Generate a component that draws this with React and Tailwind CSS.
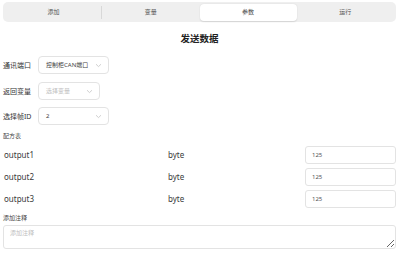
import React from "react";

const font = { fontFamily: '"Noto Sans", "Noto Sans CJK SC", sans-serif' };

function Chevron() {
  return (
    <svg width="7" height="5" viewBox="0 0 7 5" className="shrink-0">
      <path d="M1 1.2 L3.5 3.6 L6 1.2" fill="none" stroke="#c4c4c4" strokeWidth="0.8" />
    </svg>
  );
}

function Select({ width, value, placeholder }) {
  return (
    <div
      className={`flex h-[18px] items-center justify-between rounded-[4px] border border-[#e3e3e3] bg-white pl-[7px] pr-[6px] ${width}`}
    >
      <span className={`text-[6px] leading-none ${placeholder ? "text-[#c0c0c0]" : "text-[#444]"}`}>
        {value}
      </span>
      <Chevron />
    </div>
  );
}

function FormRow({ label, children, className }) {
  return (
    <div className={`flex h-[18px] items-center ${className}`}>
      <span className="w-[35px] text-[7px] leading-none text-[#333]">{label}</span>
      {children}
    </div>
  );
}

function TableRow({ name, className }) {
  return (
    <div className={`flex h-[18px] items-center ${className}`}>
      <span className="w-[165px] pl-[1px] text-[8px] leading-none text-[#3a3a3a]">{name}</span>
      <span className="flex-1 text-[8px] leading-none text-[#3a3a3a]">byte</span>
      <div className="flex h-[18px] w-[91px] items-center rounded-[3px] border border-[#e3e3e3] bg-white pl-[6px]">
        <span className="text-[6px] leading-none text-[#555]">125</span>
      </div>
    </div>
  );
}

export default function App() {
  const tabs = ["添加", "变量", "参数", "运行"];
  return (
    <div className="h-[258px] w-[399px] overflow-hidden bg-white px-[3px]" style={font}>
      <div className="mt-[2px] flex h-[20px] items-stretch rounded-[5px] bg-[#efefef] px-[2px] py-[1.5px]">
        {tabs.map((t, i) => (
          <div key={t} className="relative flex flex-1 items-center justify-center">
            {i === 2 ? (
              <div className="flex h-full w-full items-center justify-center rounded-[4px] bg-white shadow-[0_0.5px_1.5px_rgba(0,0,0,0.12)]">
                <span className="text-[6px] leading-none text-[#444]">{t}</span>
              </div>
            ) : (
              <span className="text-[6px] leading-none text-[#555]">{t}</span>
            )}
            {i === 0 && (
              <div className="absolute right-0 top-[2px] bottom-[2px] w-px bg-[#d8d8d8]" />
            )}
          </div>
        ))}
      </div>

      <div className="mt-[10px] h-[14px] text-center text-[9.5px] font-bold leading-[14px] text-[#222]">
        发送数据
      </div>

      <FormRow label="通讯端口" className="mt-[10px]">
        <Select width="w-[71px]" value="控制柜CAN端口" />
      </FormRow>
      <FormRow label="返回变量" className="mt-[8px]">
        <Select width="w-[62px]" value="选择变量" placeholder />
      </FormRow>
      <FormRow label="选择帧ID" className="mt-[7px]">
        <Select width="w-[71px]" value="2" />
      </FormRow>

      <div className="mt-[7px] h-[8px] text-[6px] leading-[8px] text-[#444]">配方表</div>

      <TableRow name="output1" className="mt-[6px]" />
      <TableRow name="output2" className="mt-[4px]" />
      <TableRow name="output3" className="mt-[4px]" />

      <div className="mt-[6px] h-[9px] text-[6px] leading-[9px] text-[#444]">添加注释</div>
      <textarea
        className="mt-[2px] block h-[24px] w-full resize-y rounded-[3px] border border-[#e3e3e3] px-[6px] py-[3px] text-[6px] leading-[8px] text-[#444] outline-none placeholder:text-[#c0c0c0]"
        placeholder="添加注释"
        style={font}
      />
    </div>
  );
}
